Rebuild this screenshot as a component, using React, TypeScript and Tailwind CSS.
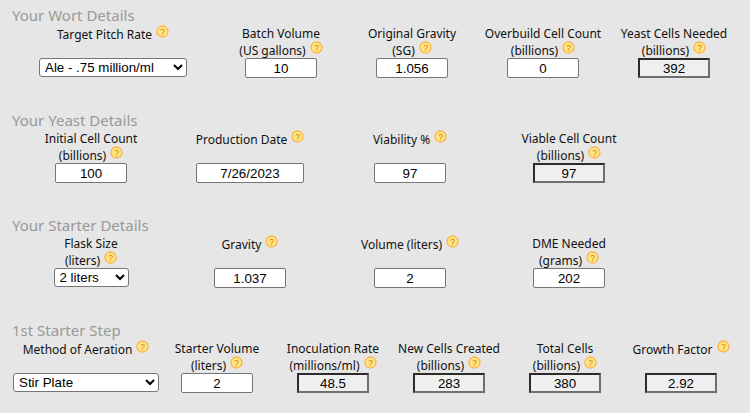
import type { ReactNode } from "react";

function Help() {
  return (
    <svg width="13" height="13" viewBox="0 0 13 13" className="ml-[4px] mt-[-1px] shrink-0" aria-hidden>
      <circle cx="6.5" cy="6.5" r="5.5" fill="#ffe680" stroke="#ffb347" strokeWidth="1.3" />
      <text x="6.5" y="9.5" textAnchor="middle" fontSize="8.5" fontFamily="Liberation Sans, sans-serif" fill="#c87f14">
        ?
      </text>
    </svg>
  );
}

function Label({ top, sub }: { top: string; sub?: string }) {
  return (
    <div className="h-[34px] whitespace-nowrap text-[12px] leading-[17px] text-[#111]">
      {sub ? (
        <>
          <div className="text-center">{top}</div>
          <div className="flex items-start justify-center">
            {sub}
            <Help />
          </div>
        </>
      ) : (
        <div className="flex items-start justify-center pt-[1px]">
          {top}
          <Help />
        </div>
      )}
    </div>
  );
}

function Field({ top, sub, children }: { top: string; sub?: string; children: ReactNode }) {
  return (
    <div className="flex flex-col items-center">
      <Label top={top} sub={sub} />
      <div className="mt-[-1px] flex h-[20px] justify-center">{children}</div>
    </div>
  );
}

function Input({ value }: { value: string }) {
  return (
    <input
      readOnly
      value={value}
      className="h-[20px] w-[72px] rounded-[2px] border border-[#767676] bg-white text-center font-['Liberation_Sans',sans-serif] text-[13.33px] text-black"
    />
  );
}

function Output({ value }: { value: string }) {
  return (
    <input
      readOnly
      value={value}
      className="h-[20px] w-[72px] border-2 border-t-[#2b2b2b] border-r-[#6f6f6f] border-b-[#6f6f6f] border-l-[#2b2b2b] bg-[#efefef] text-center font-['Liberation_Sans',sans-serif] text-[13.33px] text-black"
    />
  );
}

function Select({ value, className }: { value: string; className: string }) {
  return (
    <select
      defaultValue={value}
      className={`h-[19px] rounded-[3px] border border-[#767676] bg-white pl-[1px] font-['Liberation_Sans',sans-serif] text-[13.33px] text-black ${className}`}
    >
      <option>{value}</option>
    </select>
  );
}

function Section({ title, columns, children }: { title: string; columns: string; children: ReactNode }) {
  return (
    <section className="h-[105px]">
      <h2 className="h-[18px] pl-[12px] text-[15px] leading-[17px] text-[#999]">{title}</h2>
      <div className={`grid ${columns}`}>{children}</div>
    </section>
  );
}

export default function App() {
  return (
    <div className="h-[413px] w-[750px] overflow-hidden bg-[#e6e6e6] pt-[7px] font-['Noto_Sans',sans-serif]">
      <Section title="Your Wort Details" columns="grid-cols-[204px_132px_130px_132px_130px] pl-[11px]">
        <Field top="Target Pitch Rate">
          <Select value="Ale - .75 million/ml" className="w-[148px]" />
        </Field>
        <Field top="Batch Volume" sub="(US gallons)">
          <Input value="10" />
        </Field>
        <Field top="Original Gravity" sub="(SG)">
          <Input value="1.056" />
        </Field>
        <Field top="Overbuild Cell Count" sub="(billions)">
          <Input value="0" />
        </Field>
        <Field top="Yeast Cells Needed" sub="(billions)">
          <Output value="392" />
        </Field>
      </Section>

      <Section title="Your Yeast Details" columns="grid-cols-[160px_158px_162px_156px] pl-[11px]">
        <Field top="Initial Cell Count" sub="(billions)">
          <Input value="100" />
        </Field>
        <Field top="Production Date">
          <input
            readOnly
            value="7/26/2023"
            className="h-[20px] w-[108px] rounded-[2px] border border-[#767676] bg-white text-center font-['Liberation_Sans',sans-serif] text-[13.33px] text-black"
          />
        </Field>
        <Field top="Viability %">
          <Input value="97" />
        </Field>
        <Field top="Viable Cell Count" sub="(billions)">
          <Output value="97" />
        </Field>
      </Section>

      <Section title="Your Starter Details" columns="grid-cols-[160px_158px_162px_156px] pl-[11px]">
        <Field top="Flask Size" sub="(liters)">
          <Select value="2 liters" className="w-[75px]" />
        </Field>
        <Field top="Gravity">
          <Input value="1.037" />
        </Field>
        <Field top="Volume (liters)">
          <Input value="2" />
        </Field>
        <Field top="DME Needed" sub="(grams)">
          <Input value="202" />
        </Field>
      </Section>

      <Section title="1st Starter Step" columns="grid-cols-[146px_116px_116px_116px_116px_116px] pl-[13px]">
        <Field top="Method of Aeration">
          <Select value="Stir Plate" className="w-[146px]" />
        </Field>
        <Field top="Starter Volume" sub="(liters)">
          <Input value="2" />
        </Field>
        <Field top="Inoculation Rate" sub="(millions/ml)">
          <Output value="48.5" />
        </Field>
        <Field top="New Cells Created" sub="(billions)">
          <Output value="283" />
        </Field>
        <Field top="Total Cells" sub="(billions)">
          <Output value="380" />
        </Field>
        <Field top="Growth Factor">
          <Output value="2.92" />
        </Field>
      </Section>
    </div>
  );
}
